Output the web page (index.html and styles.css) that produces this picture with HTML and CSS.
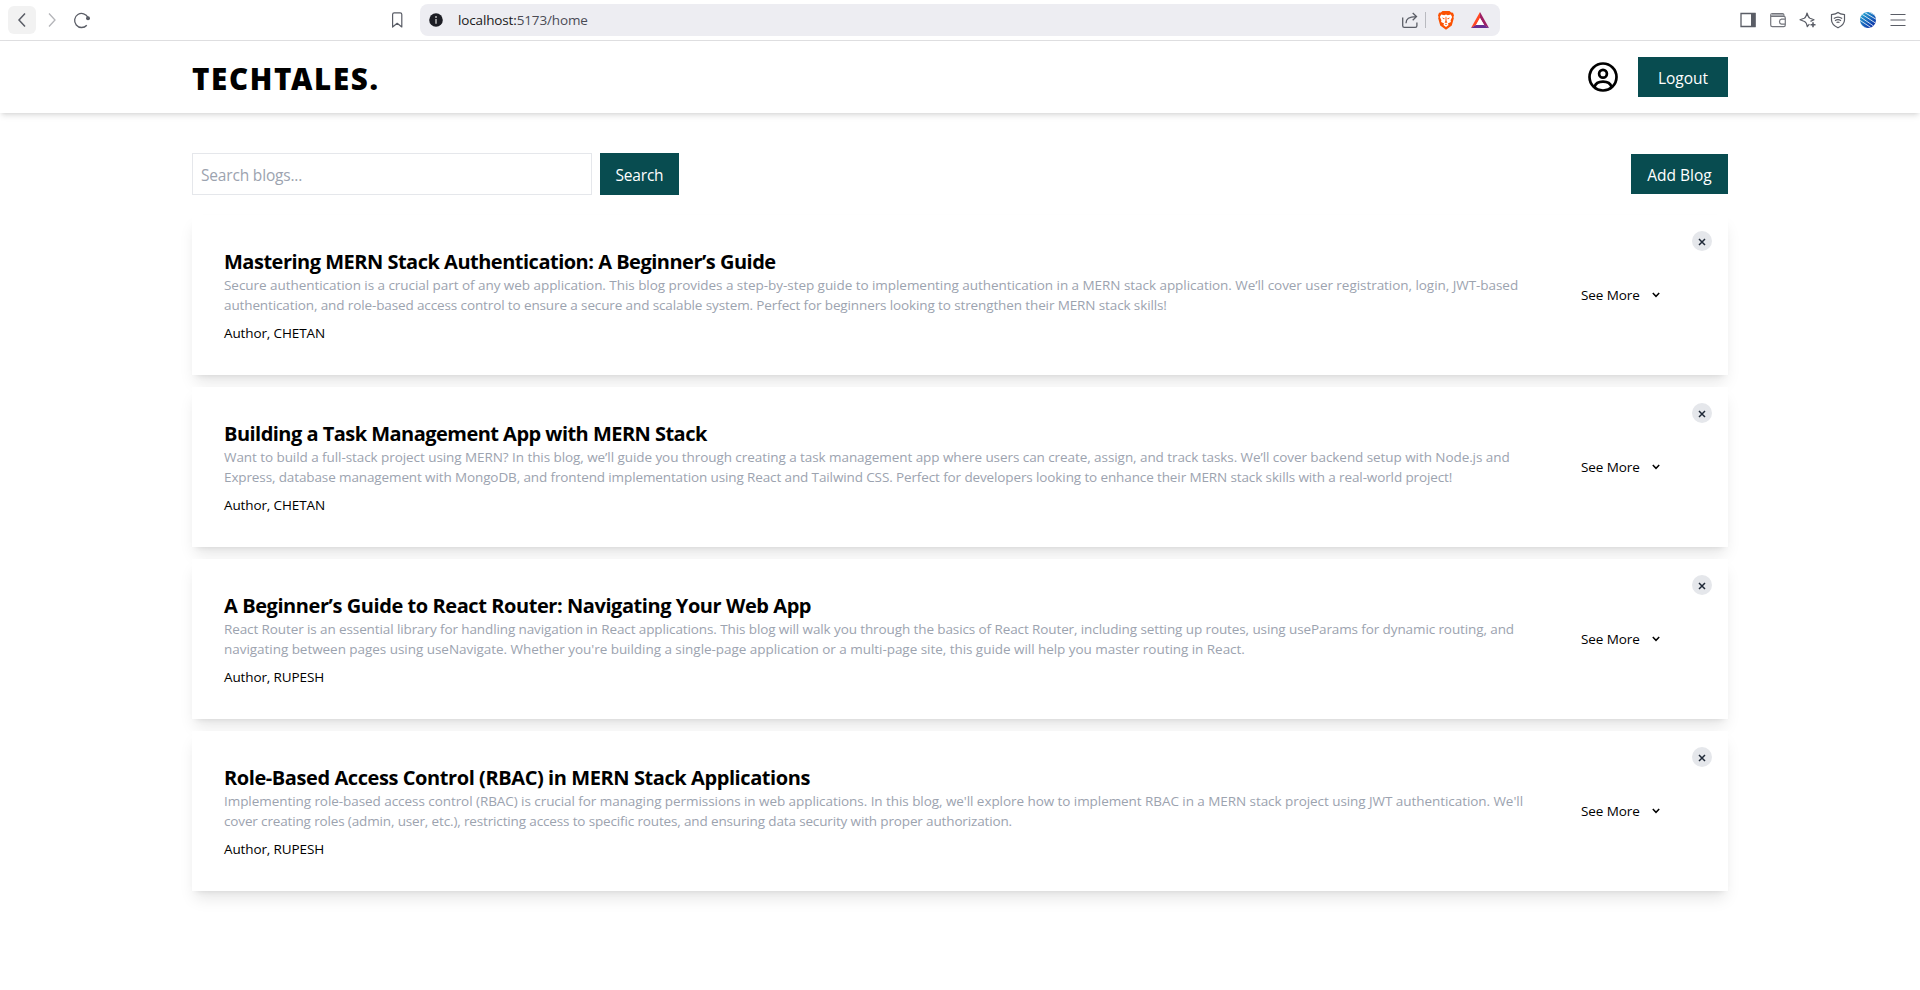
FILE: index.html
```html
<!DOCTYPE html>
<html lang="en">
<head>
<meta charset="utf-8">
<title>TechTales</title>
<link rel="stylesheet" href="styles.css">
</head>
<body>
<div class="toolbar">
  <div class="nav-buttons">
    <span class="tool back"><svg width="20" height="20" viewBox="0 0 20 20"><path d="M13 3.5 7 10l6 6.5" fill="none" stroke="#5a5d66" stroke-width="1.5"/></svg></span>
    <span class="tool"><svg width="20" height="20" viewBox="0 0 20 20"><path d="M7 3.5 13 10l-6 6.5" fill="none" stroke="#b4b5b9" stroke-width="1.3"/></svg></span>
    <span class="tool"><svg width="20" height="20" viewBox="0 0 20 20"><path d="M14.8 15.200A7 7 0 1 1 16 7.600" fill="none" stroke="#5a5d66" stroke-width="1.3"/><circle cx="16" cy="8.200" r="2" fill="#5a5d66"/></svg></span>
  </div>
  <span class="tool bookmark"><svg width="20" height="20" viewBox="0 0 20 20"><path d="M5.600 17V4.500q0-1.600 1.600-1.600h6q1.600 0 1.600 1.600V17l-4.600-3.700z" fill="none" stroke="#5a5d66" stroke-width="1.200" stroke-linejoin="round"/></svg></span>
  <div class="address">
    <svg class="info" width="14" height="14" viewBox="0 0 14 14"><circle cx="7" cy="7" r="6.800" fill="#1c1d24"/><circle cx="7" cy="4" r="1" fill="#bbb"/><path d="M7 6v4.800" stroke="#bbb" stroke-width="1.500"/></svg>
    <span class="url"><span class="host">localhost:</span>5173/home</span>
    <svg class="share" width="18" height="18" viewBox="0 0 18 18" fill="none" stroke="#5a5d66" stroke-width="1.300"><path d="M1.700 6.500v8.200q0 1.600 1.600 1.600h11q1.600 0 1.600-1.600v-3.200M5 12.300C5 8 8 5.600 15 5.600M11.700 2l3.800 3.600-3.800 3.600"/></svg>
    <span class="divider"></span>
    <svg class="brave" width="18" height="20" viewBox="0 0 18 20"><path d="M5.500 1h7l1.700 1.600 1.800.2 1 2.700-.6 1.500.4 1.200-2 7.200-5.800 4.300-5.800-4.300-2-7.200.4-1.200L1 5.500l1-2.700 1.800-.2z" fill="#fb5102"/><path d="m4.200 4.600 3 .6 1.800-.6 1.800.6 3-.6 1.300 2.300-1.500 3.400.3 1.600-3 1.700.7 1.500L9 17l-2.600-1.900.7-1.500-3-1.700.3-1.600L2.900 6.900z" fill="#fff"/><path d="m4.700 7.500 3 .8-.6 1.100zM13.300 7.500l-3 .8.6 1.100zM8.600 6.800h.8l.2 4.400.9 1L9 13l-1.500-.8.9-1zM7.700 14.200 9 13.700l1.300.5L9 15.100z" fill="#fb5102"/></svg>
    <svg class="bat" width="18" height="17" viewBox="0 0 18 17"><path d="M9 0 0 16l5-2.800L9 6z" fill="#ff4724"/><path d="M9 0v6l4.200 7.200L18 16z" fill="#9e1f63"/><path d="M0 16h18l-4.800-3H5z" fill="#662d91"/><path d="M9 6 5 13h8.200z" fill="#fff"/></svg>
  </div>
  <div class="extensions">
    <svg width="20" height="20" viewBox="0 0 20 20"><path d="M3 3.500h14v13H3z" fill="none" stroke="#5a5d66" stroke-width="1.300"/><path d="M13 3h4.500v14H13z" fill="#5a5d66"/></svg>
    <svg width="20" height="20" viewBox="0 0 20 20" fill="none" stroke="#74767d" stroke-width="1.200"><path d="M2.700 4.900V15q0 1.700 1.700 1.700h11.300q1.600 0 1.600-1.700V8q0-1.600-1.600-1.600H4.300q-1.600 0-1.600-1.400 0-1.500 1.600-1.500h10.200q1.500 0 1.500 2.500M17 9.200h-3.500a2.500 2.500 0 0 0 0 4.900H17"/><path d="M4 4h11v2H4z" fill="#a9abb0" stroke="none"/></svg>
    <svg width="20" height="20" viewBox="0 0 20 20" fill="none" stroke="#5a5d66" stroke-width="1.200" stroke-linejoin="round"><path d="M11.400 14.200 9.300 16.700q-.7-4.200-2.800-5.200L2 9.800l4.200-1.500Q8 7.500 9 3q1.200 4.500 3 5.300l4 1.500-3.500 1.600"/><path d="M15 12.200v5M12.500 14.700h5" stroke-width="1.600"/></svg>
    <svg width="20" height="20" viewBox="0 0 20 20" fill="none" stroke="#5a5d66" stroke-width="1.200"><path d="M10 2.500q2 1.700 6.500 2.200V10q0 4.500-6.500 7.800Q3.500 14.500 3.500 10V4.700Q8 4.200 10 2.500z"/><path d="M5.800 8.600q4.200-2.800 8.400 0M7 10.700q3-2 6 0M8.500 12.600q1.500-1 3 0" stroke-width="1.200"/></svg>
    <svg width="20" height="20" viewBox="0 0 20 20"><defs><linearGradient id="orb" x1="0" y1="0" x2=".8" y2="1"><stop offset="0" stop-color="#2cb5d8"/><stop offset="1" stop-color="#0829a5"/></linearGradient><clipPath id="disc"><circle cx="10" cy="10" r="8"/></clipPath></defs><circle cx="10" cy="10" r="8" fill="url(#orb)"/><g clip-path="url(#disc)" stroke="#fff" stroke-width=".8" fill="none"><path d="m6-1 16 9M4 1l17 10M2 3l17 11M1 6l16 11M0 9l15 10M0 13l12 8"/></g></svg>
    <svg width="20" height="20" viewBox="0 0 20 20"><path d="M2.500 4.500h15M2.500 10h15M2.500 15.500h15" stroke="#5a5d66" stroke-width="1.200"/></svg>
  </div>
</div>

<header class="site-header">
  <div class="logo">TECHTALES.</div>
  <div class="account">
    <svg width="30" height="30" viewBox="0 0 30 30" fill="none" stroke="#000" stroke-width="2.700"><circle cx="15" cy="15" r="13.500"/><circle cx="15" cy="11.800" r="3.900"/><path d="M6.500 25c1-3.500 4-5.300 8.500-5.300s7.500 1.800 8.500 5.300"/></svg>
    <button class="btn logout">Logout</button>
  </div>
</header>

<main class="content">
  <div class="actions">
    <div class="search">
      <input class="search-input" type="text" placeholder="Search blogs...">
      <button class="btn search-btn">Search</button>
    </div>
    <button class="btn add">Add Blog</button>
  </div>

  <article class="card auth">
    <div class="body">
      <h2 class="title">Mastering MERN Stack Authentication: A Beginner’s Guide</h2>
      <p class="text"><span class="first">Secure authentication is a crucial part of any web application. This blog provides a step-by-step guide to implementing authentication in a MERN stack application. We’ll cover user registration, login, JWT-based</span><br><span class="second">authentication, and role-based access control to ensure a secure and scalable system. Perfect for beginners looking to strengthen their MERN stack skills!</span></p>
      <p class="author">Author, CHETAN</p>
    </div>
    <div class="more"><span>See More</span><svg width="8" height="6" viewBox="0 0 8 6"><path d="m.8 1 3.200 3.300L7.200 1" fill="none" stroke="#000" stroke-width="1.500"/></svg></div>
    <button class="close"><svg width="8" height="8" viewBox="0 0 8 8"><path d="m1 1 6 6M7 1 1 7" stroke="#1f2937" stroke-width="1.500"/></svg></button>
  </article>

  <article class="card tasks">
    <div class="body">
      <h2 class="title">Building a Task Management App with MERN Stack</h2>
      <p class="text"><span class="first">Want to build a full-stack project using MERN? In this blog, we’ll guide you through creating a task management app where users can create, assign, and track tasks. We’ll cover backend setup with Node.js and</span><br><span class="second">Express, database management with MongoDB, and frontend implementation using React and Tailwind CSS. Perfect for developers looking to enhance their MERN stack skills with a real-world project!</span></p>
      <p class="author">Author, CHETAN</p>
    </div>
    <div class="more"><span>See More</span><svg width="8" height="6" viewBox="0 0 8 6"><path d="m.8 1 3.200 3.300L7.200 1" fill="none" stroke="#000" stroke-width="1.500"/></svg></div>
    <button class="close"><svg width="8" height="8" viewBox="0 0 8 8"><path d="m1 1 6 6M7 1 1 7" stroke="#1f2937" stroke-width="1.500"/></svg></button>
  </article>

  <article class="card router">
    <div class="body">
      <h2 class="title">A Beginner’s Guide to React Router: Navigating Your Web App</h2>
      <p class="text"><span class="first">React Router is an essential library for handling navigation in React applications. This blog will walk you through the basics of React Router, including setting up routes, using useParams for dynamic routing, and</span><br><span class="second">navigating between pages using useNavigate. Whether you're building a single-page application or a multi-page site, this guide will help you master routing in React.</span></p>
      <p class="author">Author, RUPESH</p>
    </div>
    <div class="more"><span>See More</span><svg width="8" height="6" viewBox="0 0 8 6"><path d="m.8 1 3.200 3.300L7.200 1" fill="none" stroke="#000" stroke-width="1.500"/></svg></div>
    <button class="close"><svg width="8" height="8" viewBox="0 0 8 8"><path d="m1 1 6 6M7 1 1 7" stroke="#1f2937" stroke-width="1.500"/></svg></button>
  </article>

  <article class="card rbac">
    <div class="body">
      <h2 class="title">Role-Based Access Control (RBAC) in MERN Stack Applications</h2>
      <p class="text"><span class="first">Implementing role-based access control (RBAC) is crucial for managing permissions in web applications. In this blog, we'll explore how to implement RBAC in a MERN stack project using JWT authentication. We'll</span><br><span class="second">cover creating roles (admin, user, etc.), restricting access to specific routes, and ensuring data security with proper authorization.</span></p>
      <p class="author">Author, RUPESH</p>
    </div>
    <div class="more"><span>See More</span><svg width="8" height="6" viewBox="0 0 8 6"><path d="m.8 1 3.200 3.300L7.200 1" fill="none" stroke="#000" stroke-width="1.500"/></svg></div>
    <button class="close"><svg width="8" height="8" viewBox="0 0 8 8"><path d="m1 1 6 6M7 1 1 7" stroke="#1f2937" stroke-width="1.500"/></svg></button>
  </article>
</main>
</body>
</html>
```

FILE: styles.css
```css
* { box-sizing: border-box; }
body { margin: 0; height: 990px; overflow: hidden; background: #fff; color: #000; font-family: "Open Sans", "Noto Sans", sans-serif; }
h2, p { margin: 0; }
svg { display: block; flex: none; }
button, input { font-family: inherit; }

.toolbar { display: flex; align-items: center; height: 41px; border-bottom: 1px solid #dfdfe1; padding: 0 12px 0 8px; }
.nav-buttons { display: flex; gap: 2px; width: 379px; }
.tool { display: flex; align-items: center; justify-content: center; width: 28px; height: 28px; border-radius: 6px; }
.back { background: #f2f2f2; }
.bookmark { width: 20px; margin-right: 13px; }
.address { display: flex; align-items: center; width: 1080px; height: 32px; border-radius: 8px; background: #ededf2; padding: 0 11px 0 9px; }
.url { margin-left: 15px; margin-right: auto; font-size: 13.5px; letter-spacing: -0.14px; color: #4a4b55; white-space: nowrap; }
.host { color: #1a1a20; }
.divider { width: 1px; height: 16px; background: #b9bac0; margin: 0 11px 0 6px; }
.bat { margin-left: 16px; }
.extensions { display: flex; gap: 10px; margin-left: auto; }

.site-header { display: flex; justify-content: space-between; align-items: center; height: 72px; padding: 0 192px; box-shadow: 0 4px 6px -1px rgba(0,0,0,.1), 0 2px 4px -2px rgba(0,0,0,.1); }
.logo { padding-top: 3px; font-family: "Noto Sans", sans-serif; font-size: 29.500px; line-height: 36px; font-weight: 900; letter-spacing: 1.650px; }
.account { display: flex; align-items: center; gap: 20px; }
.btn { border: 0; padding: 1px 0 0; height: 40px; background: #084c50; color: #fff; font-size: 15.500px; line-height: 24px; letter-spacing: 0; }
.logout { width: 90px; }
.add { width: 97px; }
.search-btn { width: 79px; height: 42px; letter-spacing: -0.2px; }

.content { padding: 40px 192px 0; }
.actions { display: flex; justify-content: space-between; align-items: center; margin-bottom: 20px; }
.search { display: flex; gap: 8px; }
.search-input { width: 400px; height: 42px; border: 1px solid #e5e7eb; padding: 1px 8px 0; font-size: 15.500px; letter-spacing: -0.18px; }
.search-input::placeholder { color: #9ca3af; opacity: 1; }

.card { position: relative; display: flex; align-items: center; height: 160px; margin-bottom: 12px; padding: 32px; background: #fff; box-shadow: 0 10px 15px -3px rgba(0,0,0,.1), 0 4px 6px -4px rgba(0,0,0,.1); }
.body { width: 1357px; white-space: nowrap; }
.title { height: 28px; padding-top: 1px; font-size: 20px; line-height: 28px; font-weight: 700; letter-spacing: -0.5px; }
.text { font-size: 13.500px; line-height: 20px; color: #9ca3af; }
.author { margin-top: 8px; font-size: 13.500px; line-height: 20px; letter-spacing: -0.12px; }
.more { display: flex; align-items: center; gap: 12px; font-size: 13.500px; line-height: 20px; letter-spacing: -0.08px; white-space: nowrap; }
.close { position: absolute; top: 16px; right: 16px; display: flex; align-items: center; justify-content: center; width: 20px; height: 20px; border: 0; border-radius: 50%; padding: 2px 0 0; background: #e5e7eb; }

.auth .first { letter-spacing: -0.048px; }
.auth .second { letter-spacing: -0.117px; }
.tasks .first { letter-spacing: -0.069px; }
.tasks .second { letter-spacing: -0.118px; }
.router .first { letter-spacing: -0.104px; }
.router .second { letter-spacing: -0.042px; }
.rbac .first { letter-spacing: -0.061px; }
.rbac .second { letter-spacing: -0.145px; }
.tasks .title { letter-spacing: -0.53px; }
.router .title { letter-spacing: -0.43px; }
.rbac .title { letter-spacing: -0.42px; }
```
